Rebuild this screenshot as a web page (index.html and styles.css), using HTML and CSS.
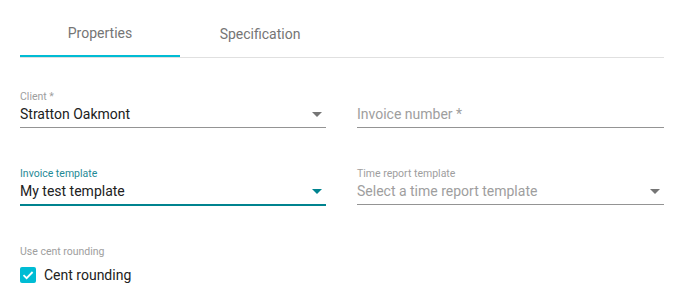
FILE: index.html
```html
<!DOCTYPE html>
<html>
<head>
<meta charset="utf-8">
<link rel="stylesheet" href="styles.css">
</head>
<body>
<div class="page">
  <div class="tabs">
    <div class="tab active">Properties</div>
    <div class="tab">Specification</div>
  </div>
  <div class="form">
    <div class="field">
      <div class="label">Client *</div>
      <div class="control">
        <span class="value">Stratton Oakmont</span>
        <span class="arrow"></span>
      </div>
    </div>
    <div class="field">
      <div class="label">&nbsp;</div>
      <div class="control">
        <span class="value placeholder">Invoice number *</span>
      </div>
    </div>
    <div class="field focused">
      <div class="label">Invoice template</div>
      <div class="control">
        <span class="value">My test template</span>
        <span class="arrow"></span>
      </div>
    </div>
    <div class="field">
      <div class="label">Time report template</div>
      <div class="control">
        <span class="value placeholder">Select a time report template</span>
        <span class="arrow"></span>
      </div>
    </div>
  </div>
  <div class="check-group">
    <div class="label">Use cent rounding</div>
    <label class="check-row">
      <span class="checkbox">
        <svg width="16" height="16" viewBox="0 0 16 16"><path d="M3.5 8.2 L6.6 11.2 L12.6 5" fill="none" stroke="#fff" stroke-width="1.8"/></svg>
      </span>
      <span class="check-text">Cent rounding</span>
    </label>
  </div>
</div>
</body>
</html>
```
FILE: styles.css
```css
* { box-sizing: border-box; }
html, body { margin: 0; padding: 0; background: #fff; }
body { font-family: Roboto, "Noto Sans", sans-serif; color: #212121; }
.page { width: 682px; padding: 0 18px 0 20px; }
.tabs { display: flex; height: 58px; border-bottom: 1px solid #e0e0e0; }
.tab {
  width: 160px; height: 57px; display: flex; align-items: center; justify-content: center;
  padding-top: 11px; font-size: 14px; color: #757575;
}
.tab.active { border-bottom: 2px solid #00bcd4; }
.form {
  display: grid; grid-template-columns: 306px 307px; column-gap: 31px; row-gap: 39px;
  margin-top: 32px;
}
.label { font-size: 10.5px; line-height: 13px; color: #9e9e9e; height: 13px; }
.control {
  display: flex; align-items: center; justify-content: space-between;
  margin-top: 1px; height: 24px; padding-bottom: 3px; padding-right: 4px;
  border-bottom: 1px solid #949494;
}
.value { font-size: 14px; line-height: 20px; color: #212121; }
.value.placeholder { color: #9e9e9e; }
.arrow {
  width: 0; height: 0; border-left: 5px solid transparent; border-right: 5px solid transparent;
  border-top: 5px solid #757575;
}
.focused .label { color: #1f8a96; }
.focused .control { border-bottom-color: #00838f; box-shadow: 0 1px 0 #00838f; }
.focused .arrow { border-top-color: #00838f; }
.check-group { margin-top: 40px; }
.check-row { display: flex; align-items: center; gap: 8px; margin-top: 7px; height: 20px; }
.checkbox {
  width: 16px; height: 16px; border-radius: 2px; background: #00bcd4;
  display: flex; align-items: center; justify-content: center;
}
.checkbox svg { display: block; }
.check-text { font-size: 14px; line-height: 20px; color: #212121; }
```
